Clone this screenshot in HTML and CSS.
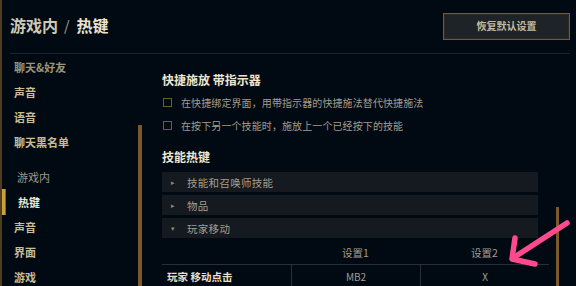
FILE: index.html
```html
<!DOCTYPE html>
<html lang="zh">
<head>
<meta charset="utf-8">
<link rel="stylesheet" href="styles.css">
</head>
<body>
<div class="frame">
  <header class="header">
    <h1 class="crumbs"><span class="crumb-parent">游戏内</span><span class="crumb-sep">/</span><span class="crumb-current">热键</span></h1>
    <button class="reset-btn">恢复默认设置</button>
  </header>
  <div class="body">
    <nav class="nav">
      <ul class="nav-list">
        <li class="nav-item dim">聊天&amp;好友</li>
        <li class="nav-item">声音</li>
        <li class="nav-item">语音</li>
        <li class="nav-item">聊天黑名单</li>
        <li class="nav-group">游戏内</li>
        <li class="nav-item selected">热键</li>
        <li class="nav-item">声音</li>
        <li class="nav-item">界面</li>
        <li class="nav-item">游戏</li>
      </ul>
      <div class="track nav-track"><div class="thumb"></div></div>
    </nav>
    <main class="content">
      <div class="content-main">
        <h2 class="section-title">快捷施放 带指示器</h2>
        <div class="check-list">
          <label class="check-row"><span class="box"></span>在快捷绑定界面，用带指示器的快捷施法替代快捷施法</label>
          <label class="check-row"><span class="box"></span>在按下另一个技能时，施放上一个已经按下的技能</label>
        </div>
        <h2 class="section-title second">技能热键</h2>
        <div class="accordion">
          <div class="acc-row"><span class="tri">▸</span>技能和召唤师技能</div>
          <div class="acc-row"><span class="tri">▸</span>物品</div>
          <div class="acc-row"><span class="tri">▾</span>玩家移动</div>
        </div>
        <div class="keytable">
          <div class="kt-head">
            <div class="kt-cell label"></div>
            <div class="kt-cell">设置1</div>
            <div class="kt-cell">设置2</div>
          </div>
          <div class="kt-row">
            <div class="kt-cell label">玩家 移动点击</div>
            <div class="kt-cell key">MB2</div>
            <div class="kt-cell key">X</div>
          </div>
        </div>
      </div>
      <div class="track content-track"><div class="thumb"></div></div>
    </main>
  </div>
  <svg class="annotation" width="576" height="286" viewBox="0 0 576 286">
    <g fill="none" stroke="#ff4a8d" stroke-width="5.5" stroke-linecap="round" stroke-linejoin="round">
      <path d="M567 223 L513 258"/>
      <path d="M515 238 L512 259 L535 264"/>
    </g>
  </svg>
</div>
</body>
</html>
```
FILE: styles.css
```css
* { box-sizing: border-box; }
html, body {
  margin: 0;
  padding: 0;
  background: #010a13;
  width: 576px;
  height: 286px;
  overflow: hidden;
  font-family: "Noto Sans CJK SC", "Noto Sans", sans-serif;
}
.frame {
  position: relative;
  width: 576px;
  height: 286px;
  border-left: 2px solid #4e3d1f;
  display: flex;
  flex-direction: column;
}
.header {
  height: 54px;
  margin: 0 6px 0 8px;
  border-bottom: 1px solid #1c232c;
  display: flex;
  align-items: center;
  justify-content: space-between;
  flex: none;
  padding-top: 1px;
}
.crumbs {
  margin: 0;
  font-size: 16px;
  font-weight: 700;
  line-height: 20px;
  color: #cfc8b4;
  display: flex;
  align-items: center;
  margin-top: -4px;
}
.crumb-sep {
  margin: 0 7px 0 6px;
  font-weight: 400;
  color: #a9a392;
  font-size: 14px;
}
.crumb-current { color: #ece3cf; }
.reset-btn {
  width: 127px;
  height: 27px;
  margin-top: -2px;
  background: #1e2328;
  border: 1px solid #785a28;
  box-shadow: inset 0 0 0 1px #2c2a22;
  color: #c4bb9c;
  font-family: inherit;
  font-size: 10px;
  font-weight: 700;
  line-height: 14px;
  padding: 0;
}
.body {
  flex: 1;
  display: flex;
  min-height: 0;
}
.nav {
  width: 141px;
  display: flex;
  flex: none;
}
.nav-list {
  list-style: none;
  margin: 0;
  padding: 1px 0 0 0;
  width: 134px;
}
.nav-item {
  height: 25px;
  line-height: 25px;
  padding-left: 12px;
  font-size: 11px;
  font-weight: 700;
  color: #c9bd99;
  position: relative;
}
.nav-item.dim { color: #9d9479; }
.nav-group {
  height: 25px;
  line-height: 25px;
  margin-top: 10px;
  padding-left: 15px;
  font-size: 11px;
  color: #9f9a8b;
}
.nav-item.selected {
  padding-left: 16px;
  color: #eee6d2;
}
.nav-item.selected::before {
  content: "";
  position: absolute;
  left: 0;
  top: -1px;
  width: 3px;
  height: 26px;
  background: #c8a03c;
  border-right: 1px solid #8a6a28;
}
.track {
  display: flex;
  flex-direction: column;
  flex: none;
}
.nav-track { width: 4px; margin-left: 2px; }
.nav-track .thumb { margin-top: 71px; }
.thumb {
  flex: 1;
  background: #7a5a2b;
}
.content {
  flex: 1;
  display: flex;
  min-width: 0;
}
.content-main {
  width: 413px;
  padding: 18px 0 0 19px;
}
.content-track { width: 3px; }
.content-track .thumb { margin-top: 153px; }
.section-title {
  margin: 0;
  height: 16px;
  line-height: 16px;
  font-size: 12px;
  font-weight: 700;
  color: #eee5d1;
}
.section-title.second { margin-top: 12px; }
.check-list { margin-top: 3px; }
.check-row {
  display: flex;
  align-items: center;
  height: 23px;
  font-size: 10px;
  letter-spacing: 0.1px;
  color: #a39d8c;
}
.box {
  width: 9px;
  height: 9px;
  border: 1px solid #785a28;
  margin: 0 9px 0 1px;
  flex: none;
}
.accordion {
  margin-top: 7px;
  width: 376px;
  display: flex;
  flex-direction: column;
  gap: 3px;
}
.acc-row {
  height: 20px;
  background: #151a20;
  display: flex;
  align-items: center;
  font-size: 10.5px;
  color: #a39d8c;
  padding-left: 9px;
  letter-spacing: 0.3px;
}
.tri {
  font-size: 7px;
  color: #8c8778;
  width: 16px;
}
.keytable {
  width: 387px;
  font-size: 10.5px;
  color: #a39d8c;
}
.kt-head {
  display: flex;
  height: 27px;
  border-bottom: 1px solid #2a2f36;
  align-items: center;
  padding-top: 2px;
}
.kt-row {
  display: flex;
  height: 24px;
  align-items: center;
}
.kt-cell {
  flex: none;
  width: 129px;
  text-align: center;
}
.kt-cell.label {
  text-align: left;
  padding-left: 5px;
  font-weight: 700;
  color: #e8dfcb;
}
.kt-row .kt-cell { height: 24px; line-height: 24px; }
.kt-row .kt-cell.key { border-left: 1px solid #2a2f36; }
.kt-cell.key { font-size: 10px; }
.annotation {
  position: absolute;
  left: -2px;
  top: 0;
  pointer-events: none;
}
```
